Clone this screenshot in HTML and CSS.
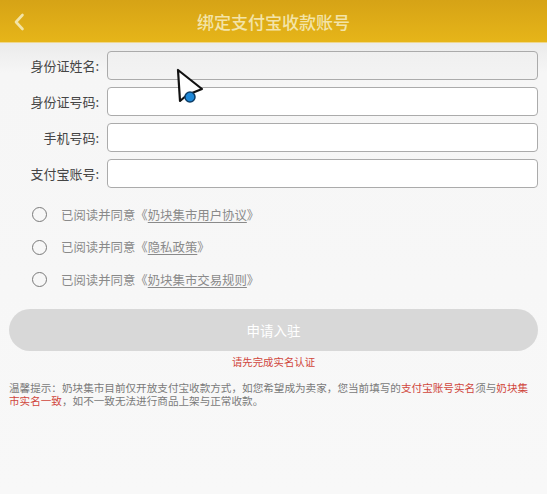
FILE: index.html
```html
<!DOCTYPE html>
<html lang="zh-CN">
<head>
<meta charset="utf-8">
<title>绑定支付宝收款账号</title>
<link rel="stylesheet" href="styles.css">
</head>
<body>
<div class="page">
  <header class="topbar">
    <span class="back">
      <svg width="14" height="18" viewBox="0 0 14 18"><path d="M10.5 2 L4 9 L10.5 16" fill="none" stroke="#f3e4a8" stroke-width="2.6" stroke-linecap="round" stroke-linejoin="round"/></svg>
    </span>
    <h1 class="title">绑定支付宝收款账号</h1>
    <span class="spacer"></span>
  </header>

  <main class="content">
    <form class="form">
      <label class="label">身份证姓名:</label>
      <div class="field field-disabled"></div>
      <label class="label">身份证号码:</label>
      <div class="field"></div>
      <label class="label">手机号码:</label>
      <div class="field"></div>
      <label class="label">支付宝账号:</label>
      <div class="field"></div>
    </form>

    <ul class="agreements">
      <li class="agree"><span class="radio"></span><span class="agree-text">已阅读并同意《<u>奶块集市用户协议</u>》</span></li>
      <li class="agree"><span class="radio"></span><span class="agree-text">已阅读并同意《<u>隐私政策</u>》</span></li>
      <li class="agree"><span class="radio"></span><span class="agree-text">已阅读并同意《<u>奶块集市交易规则</u>》</span></li>
    </ul>

    <div class="submit">申请入驻</div>
    <p class="warn">请先完成实名认证</p>
    <p class="tips">温馨提示：奶块集市目前仅开放支付宝收款方式，如您希望成为卖家，您当前填写的<span class="red">支付宝账号实名</span>须与<span class="red">奶块集市实名一致</span>，如不一致无法进行商品上架与正常收款。</p>
  </main>

  <svg class="cursor" width="34" height="42" viewBox="0 0 34 42">
    <path d="M4 4 L6 35 L13 29 L28 23 Z" fill="#ffffff" stroke="#111" stroke-width="2.2" stroke-linejoin="round"/>
    <circle cx="16" cy="31" r="5" fill="#1e88d8" stroke="#0d3d66" stroke-width="1.5"/>
  </svg>
</div>
</body>
</html>
```

FILE: styles.css
```css
* { box-sizing: border-box; }
html, body {
  margin: 0;
  padding: 0;
  height: 100%;
}
body {
  font-family: "Noto Sans CJK SC", "Noto Sans", sans-serif;
  background: #f7f7f7;
}
.page {
  position: relative;
  min-height: 494px;
  background: #f7f7f7;
}
.topbar {
  height: 43px;
  display: grid;
  grid-template-columns: 40px 1fr 40px;
  align-items: center;
  background: linear-gradient(#d6a316, #e6b519);
  border-bottom: 1px solid #efd78c;
}
.back {
  display: flex;
  justify-content: center;
  padding-right: 2px;
  padding-top: 1px;
}
.back svg { display: block; }
.title {
  margin: 0;
  text-align: center;
  font-size: 17px;
  font-weight: 500;
  color: #f3e4a8;
  letter-spacing: 0;
}
.content {
  background: linear-gradient(#ebebeb 0, #f6f6f6 30px, #f8f8f8 100%);
  padding-top: 8px;
  min-height: 451px;
}
.form {
  margin: 0;
  display: grid;
  grid-template-columns: 99px 1fr;
  column-gap: 8px;
  row-gap: 7.5px;
  padding-right: 9px;
  align-items: center;
}
.label {
  text-align: right;
  font-size: 13px;
  color: #454545;
  white-space: nowrap;
}
.field {
  height: 28.5px;
  background: #ffffff;
  border: 1px solid #ababab;
  border-radius: 4px;
}
.field-disabled {
  background: linear-gradient(#f0f0f0, #f3f3f3);
}
.agreements {
  list-style: none;
  margin: 0;
  padding: 11px 0 0 0;
}
.agree {
  height: 32.5px;
  display: flex;
  align-items: center;
  padding-left: 32px;
  gap: 14px;
}
.radio {
  width: 15px;
  height: 15px;
  border: 1.6px solid #7a7a7a;
  border-radius: 50%;
  flex: none;
}
.agree-text {
  font-size: 12.4px;
  color: #8a8a8a;
}
.agree-text u {
  text-decoration-color: #8a8a8a;
  text-underline-offset: 2px;
}
.submit {
  margin: 13px 9px 0 9px;
  height: 42px;
  border-radius: 21px;
  background: #d8d8d8;
  color: #ffffff;
  font-size: 13.5px;
  display: flex;
  align-items: center;
  justify-content: center;
}
.warn {
  margin: 4px 0 0 0;
  text-align: center;
  font-size: 10.4px;
  line-height: 14px;
  color: #d0463c;
}
.tips {
  margin: 12px 0 0 0;
  padding: 0 14px 0 9px;
  font-size: 10.6px;
  line-height: 13px;
  color: #7a7a7a;
}
.red { color: #d0463c; }
.cursor {
  position: absolute;
  left: 174px;
  top: 66px;
}
```
